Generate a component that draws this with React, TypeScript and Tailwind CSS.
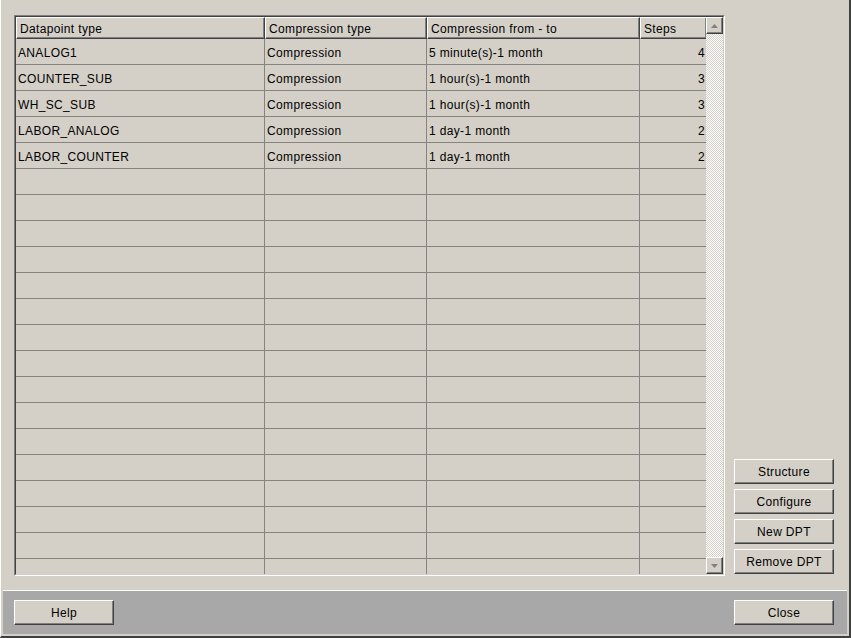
import React from "react";

const rows: [string, string, string, string][] = [
  ["ANALOG1", "Compression", "5 minute(s)-1 month", "4"],
  ["COUNTER_SUB", "Compression", "1 hour(s)-1 month", "3"],
  ["WH_SC_SUB", "Compression", "1 hour(s)-1 month", "3"],
  ["LABOR_ANALOG", "Compression", "1 day-1 month", "2"],
  ["LABOR_COUNTER", "Compression", "1 day-1 month", "2"],
];

const allRows: [string, string, string, string][] = [
  ...rows,
  ...Array.from({ length: 17 }, () => ["", "", "", ""] as [string, string, string, string]),
];

function Btn({ label }: { label: string }) {
  return (
    <div className="w-[100px] h-[25px] flex items-center justify-center pt-[1px] bg-[#d4d0c8] border border-t-white border-l-white border-r-[#404040] border-b-[#404040] shadow-[inset_-1px_-1px_0_#808080] text-[12px] text-black leading-none">
      {label}
    </div>
  );
}

function ScrollBtn({ up }: { up: boolean }) {
  return (
    <div className="w-[17px] h-[17px] shrink-0 flex items-center justify-center bg-[#d4d0c8] border border-t-white border-l-white border-r-[#404040] border-b-[#404040] shadow-[inset_-1px_-1px_0_#808080]">
      <svg width="7" height="4" viewBox="0 0 7 4">
        {up ? (
          <polygon points="3.5,0 7,4 0,4" fill="#808080" />
        ) : (
          <polygon points="0,0 7,0 3.5,4" fill="#808080" />
        )}
      </svg>
    </div>
  );
}

export default function App() {
  const widths = ["w-[249px]", "w-[162px]", "w-[213px]", "w-[67px]"];
  const headers = ["Datapoint type", "Compression type", "Compression from - to", "Steps"];
  return (
    <div className="w-[851px] h-[638px] bg-[#d4d0c8] border-l border-l-white border-r-2 border-r-[#404040] border-b-2 border-b-[#404040] flex flex-col font-['Liberation_Sans',Arial,sans-serif] text-[12px] tracking-[0.35px] text-black overflow-hidden">
      <div className="h-[590px] flex items-start pt-[15px] pl-[13px] shrink-0">
        {/* table frame */}
        <div className="w-[711px] h-[561px] border border-t-[#808080] border-l-[#808080] border-r-white border-b-white">
          <div className="w-full h-full border border-t-[#404040] border-l-[#404040] border-r-[#d4d0c8] border-b-[#d4d0c8] flex overflow-hidden">
            <div className="w-[691px] flex flex-col overflow-hidden">
              <div className="flex h-[22px] shrink-0">
                {headers.map((h, i) => (
                  <div
                    key={i}
                    className={`${widths[i]} h-full shrink-0 flex items-center pl-[3px] pt-[1px] border border-t-white border-l-white border-r-[#404040] border-b-[#404040] shadow-[inset_-1px_-1px_0_#808080]`}
                  >
                    {h}
                  </div>
                ))}
              </div>
              {allRows.map((r, ri) => (
                <div key={ri} className="flex h-[26px] shrink-0 border-b border-b-[#868480]">
                  {r.map((c, ci) => (
                    <div
                      key={ci}
                      className={`${widths[ci]} h-full shrink-0 flex items-center pt-[2px] border-r border-r-[#868480] ${
                        ci === 3 ? "justify-end pr-[1px]" : "pl-[2px]"
                      }`}
                    >
                      {c}
                    </div>
                  ))}
                </div>
              ))}
            </div>
            <div className="w-[17px] h-full flex flex-col shrink-0">
              <ScrollBtn up />
              <div className="flex-1 bg-[image:repeating-conic-gradient(#ffffff_0_25%,#d4d0c8_0_50%)] bg-size-[2px_2px] bg-[length:2px_2px]" />
              <ScrollBtn up={false} />
            </div>
          </div>
        </div>
        <div className="ml-[9px] h-[560px] flex flex-col justify-end gap-[5px] pb-[1px]">
          <Btn label="Structure" />
          <Btn label="Configure" />
          <Btn label="New DPT" />
          <Btn label="Remove DPT" />
        </div>
      </div>
      <div className="mx-[2px] h-[44px] shrink-0 bg-[#a8a8a8] border-t border-t-white flex justify-between items-start pt-[9px] pl-[11px] pr-[13px]">
        <Btn label="Help" />
        <Btn label="Close" />
      </div>
    </div>
  );
}
